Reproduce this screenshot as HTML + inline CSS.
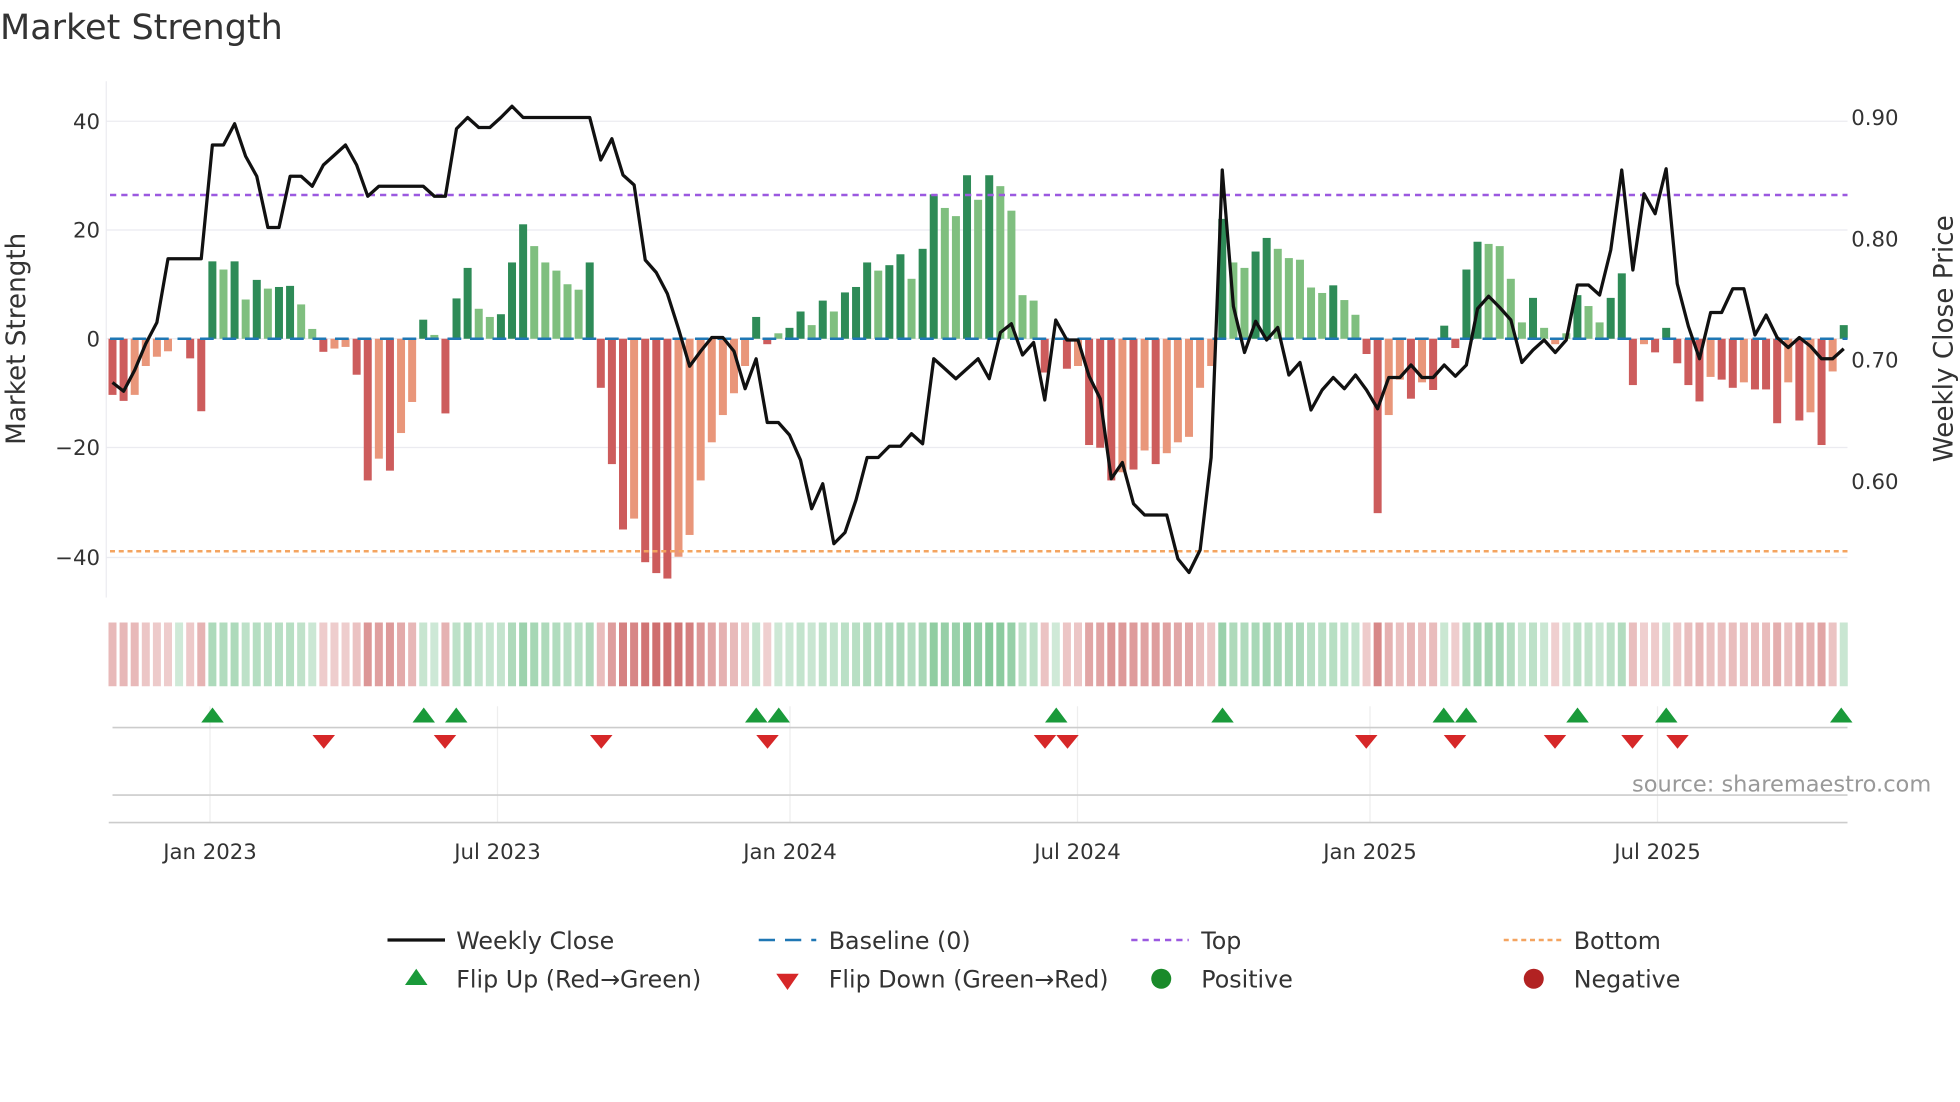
<!DOCTYPE html>
<html><head><meta charset="utf-8"><style>
html,body{margin:0;padding:0;background:#fff;}
svg{display:block;}
text{font-family:"DejaVu Sans","Liberation Sans",sans-serif;fill:#333;}
</style></head><body>
<svg id="s" width="1960" height="1102" viewBox="0 0 1568 881.6" preserveAspectRatio="none" xmlns="http://www.w3.org/2000/svg">
<rect width="1568" height="882" fill="#fff"/>
<text x="0" y="31" font-size="28">Market Strength</text>
<g stroke="#ebebf0" stroke-width="1">
<line x1="85" y1="97" x2="1478" y2="97"/><line x1="85" y1="184" x2="1478" y2="184"/>
<line x1="85" y1="271" x2="1478" y2="271"/><line x1="85" y1="358" x2="1478" y2="358"/>
<line x1="85" y1="446" x2="1478" y2="446"/>
<line x1="85" y1="65" x2="85" y2="478"/>
</g>
<g font-size="17" text-anchor="end">
<text x="80" y="103">40</text><text x="80" y="190">20</text><text x="80" y="277">0</text>
<text x="80" y="364">−20</text><text x="80" y="452">−40</text>
</g>
<g font-size="17">
<text x="1481" y="100">0.90</text><text x="1481" y="197">0.80</text>
<text x="1481" y="294">0.70</text><text x="1481" y="391">0.60</text>
</g>
<text transform="translate(20,271) rotate(-90)" font-size="21" text-anchor="middle">Market Strength</text>
<text transform="translate(1562,271) rotate(-90)" font-size="21" text-anchor="middle">Weekly Close Price</text>
<g id="bars"></g>
<line x1="88" y1="271" x2="1478" y2="271" stroke="#1f77b4" stroke-width="2" stroke-dasharray="11,7"/>
<line x1="88" y1="156" x2="1478" y2="156" stroke="#9b59e0" stroke-width="2" stroke-dasharray="5,4"/>
<line x1="88" y1="441" x2="1478" y2="441" stroke="#f4a460" stroke-width="2" stroke-dasharray="4,3"/>
<polyline id="price" fill="none" stroke="#111" stroke-width="2.6" stroke-linejoin="round"/>
<g id="strip"></g>
<g stroke="#eee"><line x1="168" y1="565" x2="168" y2="658"/><line x1="398" y1="565" x2="398" y2="658"/><line x1="632" y1="565" x2="632" y2="658"/><line x1="862" y1="565" x2="862" y2="658"/><line x1="1096" y1="565" x2="1096" y2="658"/><line x1="1326" y1="565" x2="1326" y2="658"/></g>
<line x1="90" y1="582" x2="1478" y2="582" stroke="#ccc" stroke-width="1.3"/>
<line x1="90" y1="636" x2="1478" y2="636" stroke="#ccc" stroke-width="1.3"/>
<line x1="87" y1="658" x2="1478" y2="658" stroke="#ccc" stroke-width="1.3"/>
<g id="marks"></g>
<text x="1545" y="633" font-size="18" style="fill:#999" text-anchor="end">source: sharemaestro.com</text>
<g font-size="17" text-anchor="middle">
<text x="168" y="687">Jan 2023</text><text x="398" y="687">Jul 2023</text><text x="632" y="687">Jan 2024</text>
<text x="862" y="687">Jul 2024</text><text x="1096" y="687">Jan 2025</text><text x="1326" y="687">Jul 2025</text>
</g>
<g font-size="19">
<line x1="310" y1="752" x2="356" y2="752" stroke="#111" stroke-width="2.6"/><text x="365" y="759">Weekly Close</text>
<line x1="607" y1="752" x2="653" y2="752" stroke="#1f77b4" stroke-width="2" stroke-dasharray="13,8"/><text x="663" y="759">Baseline (0)</text>
<line x1="905" y1="752" x2="951" y2="752" stroke="#9b59e0" stroke-width="2" stroke-dasharray="5,4"/><text x="961" y="759">Top</text>
<line x1="1203" y1="752" x2="1249" y2="752" stroke="#f4a460" stroke-width="2" stroke-dasharray="4,3"/><text x="1259" y="759">Bottom</text>
<polygon points="333,775 324,788 342,788" fill="#1a9a3a"/><text x="365" y="790">Flip Up (Red→Green)</text>
<polygon points="621,779 639,779 630,792" fill="#d62728"/><text x="663" y="790">Flip Down (Green→Red)</text>
<circle cx="929" cy="783" r="8" fill="#1a8a2a"/><text x="961" y="790">Positive</text>
<circle cx="1227" cy="783" r="8" fill="#b22222"/><text x="1259" y="790">Negative</text>
</g>
</svg>
<script>
var V=[[-10.3,1],[-11.4,1],[-10.3,0],[-5,0],[-3.3,0],[-2.3,0],[0,0],[-3.6,1],[-13.3,1],[14.2,1],[12.7,0],[14.2,1],[7.2,0],[10.8,1],[9.2,0],[9.5,1],[9.7,1],[6.3,0],[1.8,0],[-2.4,1],[-1.8,0],[-1.5,0],[-6.6,1],[-26,1],[-22,0],[-24.2,1],[-17.3,0],[-11.6,0],[3.5,1],[0.7,0],[-13.7,1],[7.4,1],[13,1],[5.5,0],[4,0],[4.5,1],[14,1],[21,1],[17,0],[14,0],[12.5,0],[10,0],[9,0],[14,1],[-9,1],[-23,1],[-35,1],[-33,0],[-41,1],[-43,1],[-44,1],[-40,0],[-36,0],[-26,0],[-19,0],[-14,0],[-10,0],[-5,0],[4,1],[-1,1],[1,0],[2,1],[5,1],[2.5,0],[7,1],[5,0],[8.5,1],[9.5,1],[14,1],[12.5,0],[13.5,1],[15.5,1],[11,0],[16.5,1],[26.5,1],[24,0],[22.5,0],[30,1],[25.5,0],[30,1],[28,0],[23.5,0],[8,0],[7,0],[-6.2,1],[0,0],[-5.5,1],[-5,0],[-19.5,1],[-20,1],[-26,1],[-24.5,0],[-24,1],[-20.5,0],[-23,1],[-21,0],[-19,0],[-18,0],[-9,0],[-5,0],[22,1],[14,0],[13,0],[16,1],[18.5,1],[16.5,0],[14.8,0],[14.5,0],[9.4,0],[8.4,0],[9.8,1],[7.1,0],[4.4,0],[-2.8,1],[-32,1],[-14,0],[-7.5,0],[-11,1],[-8,0],[-9.4,1],[2.4,1],[-1.7,1],[12.7,1],[17.8,1],[17.4,0],[17,0],[11,0],[3,0],[7.5,1],[2,0],[-1,0],[1,0],[8,1],[6,0],[3,0],[7.5,1],[12,1],[-8.5,1],[-1,0],[-2.5,1],[2,1],[-4.5,1],[-8.5,1],[-11.5,1],[-7,0],[-7.5,1],[-9,1],[-8,0],[-9.3,1],[-9.3,1],[-15.5,1],[-8,0],[-15,1],[-13.5,0],[-19.5,1],[-6,0],[2.5,1]];
var NS="http://www.w3.org/2000/svg";
function el(t,a,p){var e=document.createElementNS(NS,t);for(var k in a)e.setAttribute(k,a[k]);p.appendChild(e);return e;}
var bars=document.getElementById('bars'),strip=document.getElementById('strip');
var step=(1475-90)/(V.length-1),w=step*0.72,z=271,k=4.36;
V.forEach(function(d,i){var v=d[0],x=90+i*step;
 if(v!==0){var c=v>0?(d[1]?'#2e8b57':'#7fbf7f'):(d[1]?'#cd5c5c':'#e9967a');
  el('rect',{x:x-w/2,y:v>0?z-v*k:z,width:w,height:Math.abs(v)*k,fill:c},bars);}
 var a=0.25+0.55*Math.min(Math.abs(v),44)/44;
 el('rect',{x:x-w/2,y:498,width:w,height:51,fill:v>=0?'#3fa85f':'#c24848','fill-opacity':a},strip);
});
var P=[306,313,296,275,258,207,207,207,207,116,116,99,125,141,182,182,141,141,149,132,124,116,132,157,149,149,149,149,149,157,157,103,94,102,102,94,85,94,94,94,94,94,94,94,128,111,140,148,208,218,235,263,293,281,270,270,281,311,287,338,338,348,368,407,387,435,426,400,366,366,357,357,347,355,287,295,303,295,287,303,266,259,284,274,320,256,272,272,301,319,383,370,403,412,412,412,447,458,440,366,136,245,282,257,272,262,300,290,328,312,302,311,300,312,327,302,302,292,302,302,292,301,292,247,237,246,256,290,280,272,282,272,228,228,236,200,136,216,155,171,135,227,261,287,250,250,231,231,268,252,270,278,270,277,287,287,279];
var pts=P.map(function(y,i){return (90+i*(1475-90)/(P.length-1)).toFixed(1)+','+y;}).join(' ');
document.getElementById('price').setAttribute('points',pts);
var m=document.getElementById('marks');
[170,339,365,605,623,845,978,1155,1173,1262,1333,1473].forEach(function(x){el('polygon',{points:x+',566 '+(x-9)+',578 '+(x+9)+',578',fill:'#1a9a3a'},m);});
[259,356,481,614,836,854,1093,1164,1244,1306,1342].forEach(function(x){el('polygon',{points:(x-9)+',588 '+(x+9)+',588 '+x+',599',fill:'#d62728'},m);});
</script>
</body></html>
